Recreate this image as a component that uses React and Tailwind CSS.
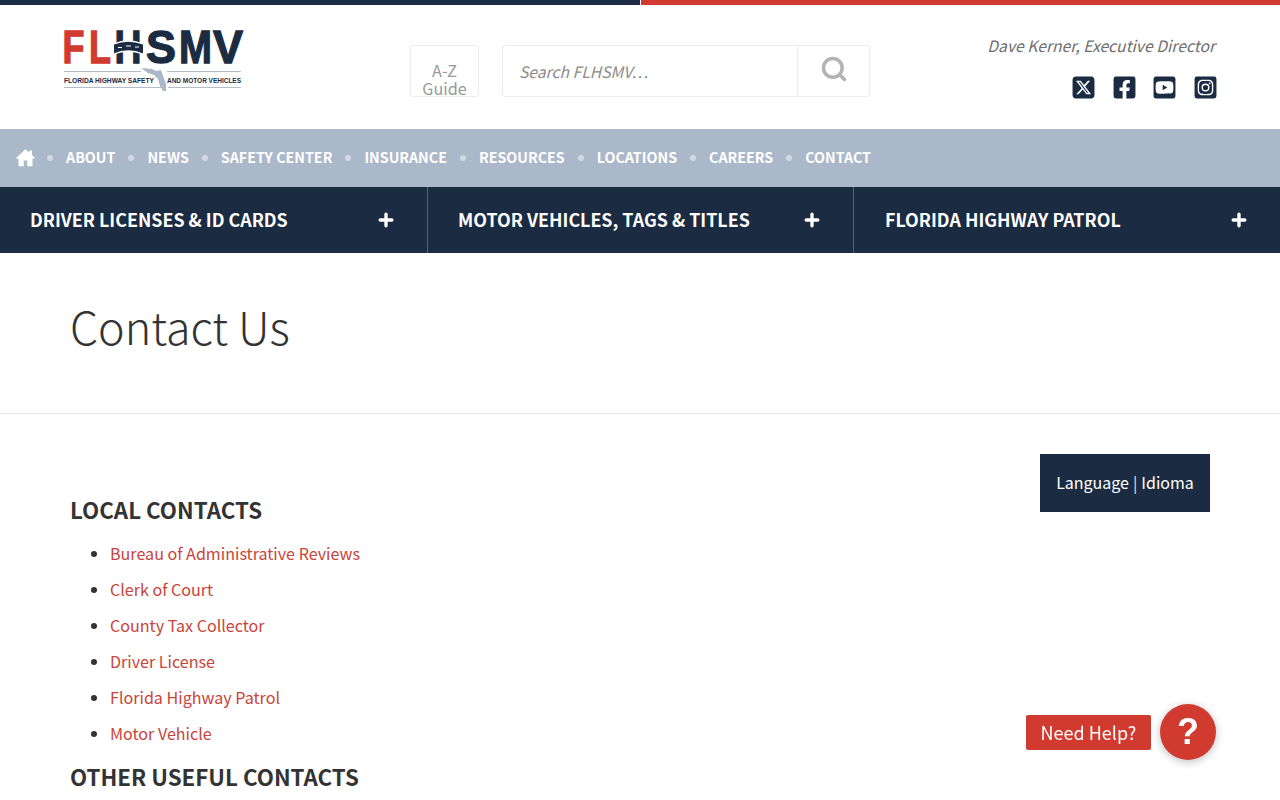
import { Plus, Search } from 'lucide-react';
import { FaFacebookSquare, FaYoutubeSquare, FaInstagramSquare } from 'react-icons/fa';
import { FaSquareXTwitter } from 'react-icons/fa6';

const sans = 'font-["Noto_Sans_CJK_SC","Noto_Sans",sans-serif]';

const topLinks = ['ABOUT', 'NEWS', 'SAFETY CENTER', 'INSURANCE', 'RESOURCES', 'LOCATIONS', 'CAREERS', 'CONTACT'];
const mainLinks = [
  { label: 'DRIVER LICENSES & ID CARDS', width: 'w-[428px]', pad: 'pl-[30px] pr-[31px]' },
  { label: 'MOTOR VEHICLES, TAGS & TITLES', width: 'w-[426px]', pad: 'pl-[30px] pr-[31px]' },
  { label: 'FLORIDA HIGHWAY PATROL', width: 'flex-1', pad: 'pl-[31px] pr-[31px]' },
];
const localContacts = [
  'Bureau of Administrative Reviews',
  'Clerk of Court',
  'County Tax Collector',
  'Driver License',
  'Florida Highway Patrol',
  'Motor Vehicle',
];
const logoLetters = [
  { ch: 'F', x: -0.5, w: 22, fill: '#d13a2f' },
  { ch: 'L', x: 26, w: 22, fill: '#d13a2f' },
  { ch: 'H', x: 51.5, w: 27, fill: '#1a2b42' },
  { ch: 'S', x: 83, w: 30, fill: '#1a2b42' },
  { ch: 'M', x: 116, w: 33, fill: '#1a2b42' },
  { ch: 'V', x: 150, w: 30, fill: '#1a2b42' },
];

function Logo() {
  const face = "'Liberation Sans', sans-serif";
  return (
    <svg width="182" height="68" viewBox="0 0 182 68" className="block">
      {logoLetters.map((l) => (
        <text
          key={l.ch}
          x={l.x}
          y="34.3"
          fontFamily={face}
          fontWeight="700"
          fontSize="47"
          fill={l.fill}
          stroke={l.fill}
          strokeWidth="1.3"
          textLength={l.w}
          lengthAdjust="spacingAndGlyphs"
        >
          {l.ch}
        </text>
      ))}
      {/* road across the H */}
      <path d="M51 15 Q65 9 80 15 V25 Q65 19 51 25 Z" fill="#1a2b42" />
      <path d="M51 15 Q65 9 80 15 M51 25 Q65 19 80 25" stroke="#fff" strokeWidth="1.3" fill="none" />
      <path d="M55 18.5 h4 M63 17 h5 M72 18 h4" stroke="#fff" strokeWidth="1.2" />
      <path d="M1 42.5 H78 M104 42.5 H178 M1 58.5 H100 M105 58.5 H178" stroke="#b4bdc9" strokeWidth="1" />
      <text x="1" y="53.5" fontFamily={face} fontWeight="700" fontSize="6.8" fill="#1a2b42" textLength="90" lengthAdjust="spacingAndGlyphs">FLORIDA HIGHWAY SAFETY</text>
      <text x="104" y="53.5" fontFamily={face} fontWeight="700" fontSize="6.8" fill="#1a2b42" textLength="74" lengthAdjust="spacingAndGlyphs">AND MOTOR VEHICLES</text>
      <path d="M78 39 L89 40 L93 42 L98 41 L100 47 L103 55 L103 62 L100 62 L97 57 L95 50 L91 46 L85 44 Z" fill="#abb8c9" />
    </svg>
  );
}

function HomeIcon() {
  return (
    <svg width="21" height="21" viewBox="0 0 24 24" fill="currentColor" className="mb-[2px] mr-[11px]">
      <path d="M12 2.5 L0.5 13 H4 V22 H10 V15.5 H14 V22 H20 V13 H23.5 L19.5 9.3 V4 H16.5 V6.6 Z" />
    </svg>
  );
}

function Header() {
  return (
    <header className="flex h-[124px] items-start">
      <div className="ml-[63px] mt-[24px] w-[347px]">
        <Logo />
      </div>
      <a className="mt-[40px] flex h-[52px] w-[69px] flex-col items-center justify-end overflow-hidden rounded-[3px] border border-[#ececec] pt-[8px] text-[16.2px] leading-[18px] text-[#999]">
        <span>A-Z</span>
        <span className="mb-[-1px]">Guide</span>
      </a>
      <div className="ml-[23px] mt-[40px] flex h-[52px] w-[368px] rounded-[3px] border border-[#ececec]">
        <div className="flex flex-1 items-center pl-[16px] pt-[2px] text-[15.7px] italic text-[#8c8c8c]">Search FLHSMV…</div>
        <div className="flex w-[72px] items-center justify-center border-l border-[#ececec] pb-[4px] text-[#b3b3b3]">
          <Search size={28} strokeWidth={3} />
        </div>
      </div>
      <div className="ml-auto mr-[65px] mt-[28px] flex flex-col items-end">
        <div className="text-[15.7px] leading-[26px] italic text-[#6f6f6f]">Dave Kerner, Executive Director</div>
        <div className="mr-[-3px] mt-[16px] flex gap-[15.6px] text-[#1a2b42]">
          <FaSquareXTwitter className="h-[25px] w-[25px]" />
          <FaFacebookSquare className="h-[25px] w-[25px]" />
          <FaYoutubeSquare className="h-[25px] w-[25px]" />
          <FaInstagramSquare className="h-[25px] w-[25px]" />
        </div>
      </div>
    </header>
  );
}

function TopNav() {
  return (
    <nav className="flex h-[58px] items-center bg-[#abb8c9] pl-[15px] text-white">
      <HomeIcon />
      {topLinks.map((link) => (
        <div key={link} className="flex items-center">
          <span className="mr-[13px] h-[6px] w-[6px] rounded-full bg-white/45" />
          <a className="mb-[2px] mr-[13px] text-[14.27px] font-bold">{link}</a>
        </div>
      ))}
    </nav>
  );
}

function MainNav() {
  return (
    <nav className="flex h-[66px] bg-[#1a2b42] text-white">
      {mainLinks.map((item, i) => (
        <div
          key={item.label}
          className={`flex items-center justify-between ${item.width} ${item.pad} ${i < 2 ? 'border-r border-[#56637a]' : ''}`}
        >
          <span className="mb-[2px] text-[17.85px] font-bold">{item.label}</span>
          <Plus size={20} strokeWidth={4} />
        </div>
      ))}
    </nav>
  );
}

export default function App() {
  return (
    <div className={`relative h-screen overflow-hidden bg-white ${sans}`}>
      <div className="flex h-[5px]">
        <div className="w-[640px] bg-[#1a2b42]" />
        <div className="ml-px flex-1 bg-[#d13a2f]" />
      </div>
      <Header />
      <TopNav />
      <MainNav />

      <div className="flex h-[161px] items-start border-b border-[#e8e8e8] pl-[70px] pt-[39px]">
        <h1 className="text-[44.8px] leading-[68px] font-light text-[#333]">Contact Us</h1>
      </div>

      <main className="px-[70px] pt-[40px]">
        <a className="float-right flex h-[58px] w-[170px] items-center justify-center bg-[#1a2b42] pb-[2px] text-[16px] text-white">
          Language <span className="mx-[4px] text-[#f3e4e4]">|</span> Idioma
        </a>
        <h2 className="pt-[38px] text-[22.3px] leading-[34px] font-bold text-[#333]">LOCAL CONTACTS</h2>
        <ul className="mt-[9px] list-disc pl-[40px] text-[16.1px] text-[#333]">
          {localContacts.map((c) => (
            <li key={c} className="h-[36px] leading-[36px]">
              <a className="text-[#c9443a]">{c}</a>
            </li>
          ))}
        </ul>
        <h2 className="mt-[8px] text-[22.3px] leading-[34px] font-bold text-[#333]">OTHER USEFUL CONTACTS</h2>
      </main>

      <div className="fixed bottom-[40px] right-[64px] flex items-center gap-[9px]">
        <a className="flex h-[35px] w-[125px] items-center justify-center rounded-[2px] bg-[#d13a2f] text-[18px] text-white">
          Need Help?
        </a>
        <a className='flex h-[56px] w-[56px] items-center justify-center rounded-full bg-[#d13a2f] font-["Liberation_Sans",sans-serif] text-[36px] font-bold text-white shadow-[0_2px_8px_rgba(0,0,0,0.25)]'>
          ?
        </a>
      </div>
    </div>
  );
}
